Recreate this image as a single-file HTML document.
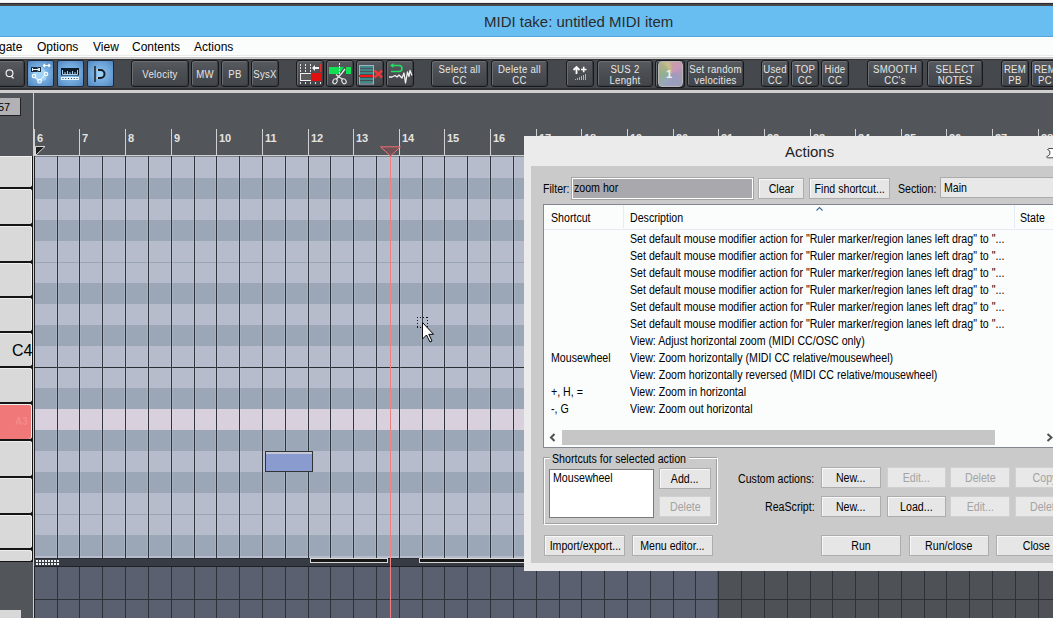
<!DOCTYPE html><html><head><meta charset="utf-8"><style>
*{margin:0;padding:0;box-sizing:border-box}
html,body{width:1053px;height:618px;overflow:hidden;background:#525559;position:relative;font-family:"Liberation Sans",sans-serif}
div{position:absolute}
.t{white-space:pre;line-height:1}
.dt{font-size:12px;color:#000;transform:scaleX(.885);transform-origin:0 0}
.tb{border:1px solid #17191c;border-radius:3px;background:linear-gradient(#575a5e,#4a4d51 50%,#424549);box-shadow:inset 1px 1px 0 #6a6d72,inset -1px -1px 0 #3a3d41}
.tbt{color:#e6e6e6;font-size:10px;line-height:10px;text-align:center;width:100%;white-space:pre;transform:scaleX(.96);letter-spacing:.3px}
.bb{border:1px solid #1c2a3c;border-radius:2px;background:radial-gradient(circle at 50% 50%,#8cc2ee 0,#6fa6da 55%,#4f84bd 100%)}
.btn{border:1px solid #adadad;background:#e6e6e6;box-shadow:inset 1px 1px 0 #f8f8f8;color:#000;font-size:12px;text-align:center;white-space:pre}
.btn span{display:inline-block;transform:scaleX(.885)}
.dis{border:1px solid #d0d0d0;background:#e8e8e8;color:#a3a3a3;box-shadow:none}
.lv{font-size:12px;color:#000;white-space:pre;line-height:1}
</style></head><body>
<div style="left:0px;top:0px;width:1053px;height:3px;background:#fafafa"></div>
<div style="left:0px;top:2px;width:1053px;height:1px;background:#ececec"></div>
<div style="left:0px;top:3px;width:1053px;height:1px;background:#2a2a2e"></div>
<div style="left:0px;top:4px;width:1053px;height:2px;background:#48484c"></div>
<div style="left:0px;top:6px;width:1053px;height:30px;background:#68bef0"></div>
<div style="left:0px;top:36px;width:1053px;height:1px;background:#55a4d6"></div>
<div class="t" style="left:484px;top:14px;font-size:15px;color:#2b2b2b">MIDI take: untitled MIDI item</div>
<div style="left:0px;top:37px;width:1053px;height:1px;background:#ffffff"></div>
<div style="left:0px;top:38px;width:1053px;height:17px;background:#fbfcfc"></div>
<div style="left:0px;top:55px;width:1053px;height:1px;background:#ebebeb"></div>
<div style="left:0px;top:56px;width:1053px;height:1px;background:#ffffff"></div>
<div style="left:0px;top:57px;width:1053px;height:1px;background:#c8c8c8"></div>
<div class="t" style="left:-1px;top:41px;font-size:12px;color:#000">gate</div>
<div class="t" style="left:37px;top:41px;font-size:12px;color:#000">Options</div>
<div class="t" style="left:93px;top:41px;font-size:12px;color:#000">View</div>
<div class="t" style="left:132px;top:41px;font-size:12px;color:#000">Contents</div>
<div class="t" style="left:194px;top:41px;font-size:12px;color:#000">Actions</div>
<div style="left:0px;top:58px;width:1053px;height:1px;background:#d0d0d0"></div>
<div style="left:0px;top:59px;width:1053px;height:1px;background:#383a3e"></div>
<div style="left:0px;top:60px;width:1053px;height:28px;background:#45484c"></div>
<div style="left:0px;top:88px;width:1053px;height:2px;background:#303236"></div>
<div style="left:0px;top:90px;width:1053px;height:3px;background:#cfcfcf"></div>
<div class="tb" style="left:-3px;top:60px;width:28px;height:27px">
<div class="tbt" style="top:9px"></div>
</div>
<div class="bb" style="left:27px;top:60px;width:27px;height:27px"></div>
<div class="bb" style="left:57px;top:60px;width:27px;height:27px"></div>
<div class="bb" style="left:87px;top:60px;width:27px;height:27px"></div>
<svg style="position:absolute;left:0px;top:60px" width="24" height="27" viewBox="0 0 24 27"><circle cx="9.5" cy="13.3" r="3.4" fill="none" stroke="#eeeeee" stroke-width="1.2"/><path d="M11 16 L13 18 H14" stroke="#eeeeee" stroke-width="1.2" fill="none"/></svg>
<svg style="position:absolute;left:27px;top:60px" width="27" height="27" viewBox="0 0 27 27"><path d="M6 10 L15 7 L20 13 L19 20 L12 22 L6 17Z" fill="#a8d8fa" opacity=".8"/><rect x="4" y="7" width="10" height="5" fill="#1c2c3c"/><path d="M5.5 9.5 H12.5 M5.5 8 V11 M12.5 8 V11 M10.5 8 L12.5 9.5 L10.5 11" stroke="#e8f4ff" stroke-width="1" fill="none"/><path d="M16.5 5.5 H23 M18 4 L16.5 5.5 L18 7 M21.5 4 L23 5.5 L21.5 7" stroke="#fff" stroke-width="1.2" fill="none"/><path d="M8 17 L12 20.5 M13.5 20 L17.5 15.5" stroke="#fff" stroke-width="1"/><circle cx="7" cy="16" r="1.8" fill="none" stroke="#fff" stroke-width="1.1"/><circle cx="12.5" cy="21.2" r="1.8" fill="none" stroke="#fff" stroke-width="1.1"/><circle cx="19" cy="14" r="1.8" fill="none" stroke="#fff" stroke-width="1.1"/></svg>
<svg style="position:absolute;left:57px;top:60px" width="27" height="27" viewBox="0 0 27 27"><rect x="4" y="8" width="18" height="7.5" fill="#0e1c2a"/><path d="M5.5 10 V14.5 H20.5 V10 M8 12 V14.5 M10.5 11 V14.5 M13 12 V14.5 M15.5 11 V14.5 M18 12 V14.5" stroke="#a8d0f0" stroke-width="1" fill="none"/><rect x="4" y="17" width="18" height="3" fill="#e6f6ff"/><path d="M5.5 18.5 H21" stroke="#203040" stroke-width="1.2" stroke-dasharray="1 1.8"/></svg>
<svg style="position:absolute;left:87px;top:60px" width="27" height="27" viewBox="0 0 27 27"><path d="M10 10 H14 A4 4 0 0 1 14 18 H10Z" fill="#9ed4fa" opacity=".8"/><path d="M8 6 V22" stroke="#1e2a36" stroke-width="1.6"/><path d="M10 10 H13.5 A4 4 0 0 1 13.5 18 H10" stroke="#141c24" stroke-width="2" fill="none"/><rect x="9.5" y="9" width="1.5" height="2" fill="#f0c090"/><rect x="9.5" y="17" width="1.5" height="2" fill="#f0c090"/></svg>
<div class="tb" style="left:131px;top:60px;width:58px;height:27px">
<div class="tbt" style="top:9px">Velocity</div>
</div>
<div class="tb" style="left:191px;top:60px;width:28px;height:27px">
<div class="tbt" style="top:9px">MW</div>
</div>
<div class="tb" style="left:221px;top:60px;width:28px;height:27px">
<div class="tbt" style="top:9px">PB</div>
</div>
<div class="tb" style="left:251px;top:60px;width:28px;height:27px">
<div class="tbt" style="top:9px">SysX</div>
</div>
<div class="tb" style="left:296px;top:60px;width:28px;height:27px">
<div class="tbt" style="top:9px"></div>
</div>
<div class="tb" style="left:326px;top:60px;width:28px;height:27px">
<div class="tbt" style="top:9px"></div>
</div>
<div class="tb" style="left:356px;top:60px;width:28px;height:27px">
<div class="tbt" style="top:9px"></div>
</div>
<div class="tb" style="left:386px;top:60px;width:28px;height:27px">
<div class="tbt" style="top:9px"></div>
</div>
<svg style="position:absolute;left:296px;top:60px" width="28" height="27" viewBox="0 0 28 27"><path d="M4.5 4 V6 M4.5 7 V9 M4.5 10 V12 M9.5 4 V6 M9.5 7 V9 M9.5 10 V12 M14.5 4 V6 M14.5 7 V9 M14.5 10 V12" stroke="#e0e0e0" stroke-width="1"/><path d="M16 8 L19 5 V7 H23 V9 H19 V11Z" fill="#f4f4f4"/><path d="M24.5 4 V12" stroke="#e03030" stroke-width="1"/><rect x="4.5" y="13.5" width="11" height="7" fill="#5c5c5c" stroke="#f0f0f0" stroke-width="1"/><rect x="15" y="13" width="10" height="8" fill="#e01010"/><path d="M4.5 22 V24 M9.5 22 V24 M14.5 22 V24 M19.5 22 V24 M24.5 22 V24" stroke="#e0e0e0" stroke-width="1"/></svg>
<svg style="position:absolute;left:326px;top:60px" width="28" height="27" viewBox="0 0 28 27"><path d="M3 7 H18 L13 14 H3Z" fill="#12e050"/><path d="M20 7 H25 V14 H20Z" fill="#12e050"/><path d="M13.5 3 V15" stroke="#f0f0f0" stroke-width="1" stroke-dasharray="2 1"/><path d="M19 9 L16 13 L10.5 19 M10 14.5 L13 17 L16.5 19" stroke="#e8e8e8" stroke-width="1.3" fill="none"/><ellipse cx="9" cy="21.3" rx="2" ry="2.6" transform="rotate(30 9 21.3)" fill="none" stroke="#e8e8e8" stroke-width="1.1"/><ellipse cx="18" cy="21.3" rx="2" ry="2.6" transform="rotate(-30 18 21.3)" fill="none" stroke="#e8e8e8" stroke-width="1.1"/></svg>
<svg style="position:absolute;left:356px;top:60px" width="28" height="27" viewBox="0 0 28 27"><rect x="3.5" y="5.5" width="14" height="18.5" fill="none" stroke="#9fb4c4" stroke-width="1"/><path d="M4 7 H17 M4 10 H17 M4 13 H17 M4 19 H17 M4 22 H17" stroke="#3f8888" stroke-width="2"/><path d="M3 16 H17" stroke="#f01818" stroke-width="2"/><path d="M18.5 10.5 L26 17.5 M26 10.5 L18.5 17.5" stroke="#e83838" stroke-width="2.6"/></svg>
<svg style="position:absolute;left:386px;top:60px" width="28" height="27" viewBox="0 0 28 27"><path d="M7 5.5 H13 A3 3 0 0 1 13 11.5 H5" stroke="#22e060" stroke-width="1.6" fill="none"/><path d="M4 5.5 L7.5 3 V8Z" fill="#22e060"/><path d="M3 17 H6 L9 15.5 L11 17 L13 15 L16 18 L18 13 L19.5 23 L21.5 12 L23 16.5 L24 10.5 L26 15.5" stroke="#f0f0f0" stroke-width="1.3" fill="none" stroke-linejoin="round"/></svg>
<div class="tb" style="left:431px;top:60px;width:57px;height:27px">
<div class="tbt" style="top:4px">Select all</div><div class="tbt" style="top:15px">CC</div>
</div>
<div class="tb" style="left:491px;top:60px;width:57px;height:27px">
<div class="tbt" style="top:4px">Delete all</div><div class="tbt" style="top:15px">CC</div>
</div>
<div class="tb" style="left:566px;top:60px;width:28px;height:27px">
<div class="tbt" style="top:9px"></div>
</div>
<svg style="position:absolute;left:566px;top:60px" width="28" height="27" viewBox="0 0 28 27"><path d="M10.5 14 V7.5 M7.5 10 L10.5 7 L13.5 10" stroke="#fafafa" stroke-width="1.8" fill="none"/><path d="M15 9.5 H20.5 M17.7 6.8 V12.3" stroke="#fafafa" stroke-width="1.6"/><path d="M9.5 19 V20 M11.5 18 V20 M13.5 17 V20 M15.5 16 V20 M17.5 15 V20 M19.5 14 V20" stroke="#8ab8f0" stroke-width="1"/></svg>
<div class="tb" style="left:597px;top:60px;width:56px;height:27px">
<div class="tbt" style="top:4px">SUS 2</div><div class="tbt" style="top:15px">Lenght</div>
</div>
<div class="tb" style="left:655px;top:60px;width:30px;height:28px;background:#2a2c30"></div>
<div style="left:658px;top:61px;width:25px;height:26px;border:1px solid #b8b8b8;border-radius:4px;background:conic-gradient(from 0deg at 55% 45%,#c8a0a0 0deg,#c898b8 50deg,#b098b8 90deg,#9c9cbc 140deg,#9aa0c0 190deg,#98a8b8 220deg,#90b090 255deg,#a0b088 285deg,#b0b088 310deg,#c8c090 335deg,#c8a898 360deg)"></div>
<div class="t" style="left:666px;top:69px;font-size:11px;font-weight:bold;color:#f0f0f0;font-family:"Liberation Serif"">1</div>
<div class="tb" style="left:687px;top:60px;width:57px;height:27px">
<div class="tbt" style="top:4px">Set random</div><div class="tbt" style="top:15px">velocities</div>
</div>
<div class="tb" style="left:761px;top:60px;width:28px;height:27px">
<div class="tbt" style="top:4px">Used</div><div class="tbt" style="top:15px">CC</div>
</div>
<div class="tb" style="left:791px;top:60px;width:28px;height:27px">
<div class="tbt" style="top:4px">TOP</div><div class="tbt" style="top:15px">CC</div>
</div>
<div class="tb" style="left:821px;top:60px;width:28px;height:27px">
<div class="tbt" style="top:4px">Hide</div><div class="tbt" style="top:15px">CC</div>
</div>
<div class="tb" style="left:867px;top:60px;width:56px;height:27px">
<div class="tbt" style="top:4px">SMOOTH</div><div class="tbt" style="top:15px">CC's</div>
</div>
<div class="tb" style="left:927px;top:60px;width:56px;height:27px">
<div class="tbt" style="top:4px">SELECT</div><div class="tbt" style="top:15px">NOTES</div>
</div>
<div class="tb" style="left:1001px;top:60px;width:28px;height:27px">
<div class="tbt" style="top:4px">REM</div><div class="tbt" style="top:15px">PB</div>
</div>
<div class="tb" style="left:1031px;top:60px;width:28px;height:27px">
<div class="tbt" style="top:4px">REM</div><div class="tbt" style="top:15px">PC</div>
</div>
<div style="left:0px;top:93px;width:1053px;height:63px;background:#525559"></div>
<div style="left:0;top:98px;width:21px;height:18px;background:#b2b2b6;border-right:1px solid #222;border-bottom:1px solid #222"></div>
<div class="t" style="left:-2px;top:102px;font-size:11px;color:#000">57</div>
<div style="left:33px;top:93px;width:1px;height:525px;background:#d0d0d0"></div>
<div style="left:34px;top:129px;width:1px;height:26px;background:#d0d0d0"></div>
<div class="t" style="left:37px;top:133px;font-size:11px;font-weight:bold;color:#e4e4e4">6</div>
<div style="left:79px;top:129px;width:1px;height:26px;background:#d0d0d0"></div>
<div class="t" style="left:82px;top:133px;font-size:11px;font-weight:bold;color:#e4e4e4">7</div>
<div style="left:125px;top:129px;width:1px;height:26px;background:#d0d0d0"></div>
<div class="t" style="left:128px;top:133px;font-size:11px;font-weight:bold;color:#e4e4e4">8</div>
<div style="left:171px;top:129px;width:1px;height:26px;background:#d0d0d0"></div>
<div class="t" style="left:174px;top:133px;font-size:11px;font-weight:bold;color:#e4e4e4">9</div>
<div style="left:216px;top:129px;width:1px;height:26px;background:#d0d0d0"></div>
<div class="t" style="left:219px;top:133px;font-size:11px;font-weight:bold;color:#e4e4e4">10</div>
<div style="left:262px;top:129px;width:1px;height:26px;background:#d0d0d0"></div>
<div class="t" style="left:265px;top:133px;font-size:11px;font-weight:bold;color:#e4e4e4">11</div>
<div style="left:308px;top:129px;width:1px;height:26px;background:#d0d0d0"></div>
<div class="t" style="left:311px;top:133px;font-size:11px;font-weight:bold;color:#e4e4e4">12</div>
<div style="left:353px;top:129px;width:1px;height:26px;background:#d0d0d0"></div>
<div class="t" style="left:356px;top:133px;font-size:11px;font-weight:bold;color:#e4e4e4">13</div>
<div style="left:399px;top:129px;width:1px;height:26px;background:#d0d0d0"></div>
<div class="t" style="left:402px;top:133px;font-size:11px;font-weight:bold;color:#e4e4e4">14</div>
<div style="left:444px;top:129px;width:1px;height:26px;background:#d0d0d0"></div>
<div class="t" style="left:447px;top:133px;font-size:11px;font-weight:bold;color:#e4e4e4">15</div>
<div style="left:490px;top:129px;width:1px;height:26px;background:#d0d0d0"></div>
<div class="t" style="left:493px;top:133px;font-size:11px;font-weight:bold;color:#e4e4e4">16</div>
<div style="left:536px;top:129px;width:1px;height:26px;background:#d0d0d0"></div>
<div class="t" style="left:539px;top:133px;font-size:11px;font-weight:bold;color:#e4e4e4">17</div>
<div style="left:581px;top:129px;width:1px;height:26px;background:#d0d0d0"></div>
<div class="t" style="left:584px;top:133px;font-size:11px;font-weight:bold;color:#e4e4e4">18</div>
<div style="left:627px;top:129px;width:1px;height:26px;background:#d0d0d0"></div>
<div class="t" style="left:630px;top:133px;font-size:11px;font-weight:bold;color:#e4e4e4">19</div>
<div style="left:673px;top:129px;width:1px;height:26px;background:#d0d0d0"></div>
<div class="t" style="left:676px;top:133px;font-size:11px;font-weight:bold;color:#e4e4e4">20</div>
<div style="left:718px;top:129px;width:1px;height:26px;background:#d0d0d0"></div>
<div class="t" style="left:721px;top:133px;font-size:11px;font-weight:bold;color:#e4e4e4">21</div>
<div style="left:764px;top:129px;width:1px;height:26px;background:#d0d0d0"></div>
<div class="t" style="left:767px;top:133px;font-size:11px;font-weight:bold;color:#e4e4e4">22</div>
<div style="left:810px;top:129px;width:1px;height:26px;background:#d0d0d0"></div>
<div class="t" style="left:813px;top:133px;font-size:11px;font-weight:bold;color:#e4e4e4">23</div>
<div style="left:855px;top:129px;width:1px;height:26px;background:#d0d0d0"></div>
<div class="t" style="left:858px;top:133px;font-size:11px;font-weight:bold;color:#e4e4e4">24</div>
<div style="left:901px;top:129px;width:1px;height:26px;background:#d0d0d0"></div>
<div class="t" style="left:904px;top:133px;font-size:11px;font-weight:bold;color:#e4e4e4">25</div>
<div style="left:946px;top:129px;width:1px;height:26px;background:#d0d0d0"></div>
<div class="t" style="left:949px;top:133px;font-size:11px;font-weight:bold;color:#e4e4e4">26</div>
<div style="left:992px;top:129px;width:1px;height:26px;background:#d0d0d0"></div>
<div class="t" style="left:995px;top:133px;font-size:11px;font-weight:bold;color:#e4e4e4">27</div>
<div style="left:1038px;top:129px;width:1px;height:26px;background:#d0d0d0"></div>
<div class="t" style="left:1041px;top:133px;font-size:11px;font-weight:bold;color:#e4e4e4">28</div>
<div style="left:34px;top:155px;width:1019px;height:1px;background:#d0d0d0"></div>
<svg style="position:absolute;left:34px;top:145px" width="14" height="12"><path d="M1.5 1.5 H11 L1.5 10.5 Z" fill="#1e1e1e" stroke="#d8d8d8" stroke-width="1"/></svg>
<div style="left:35px;top:157px;width:1018px;height:21px;background:#b6bccb"></div>
<div style="left:35px;top:178px;width:1018px;height:21px;background:#9ba6b6"></div>
<div style="left:35px;top:199px;width:1018px;height:21px;background:#b6bccb"></div>
<div style="left:35px;top:220px;width:1018px;height:21px;background:#9ba6b6"></div>
<div style="left:35px;top:241px;width:1018px;height:21px;background:#b6bccb"></div>
<div style="left:35px;top:262px;width:1018px;height:21px;background:#b6bccb"></div>
<div style="left:35px;top:283px;width:1018px;height:21px;background:#9ba6b6"></div>
<div style="left:35px;top:304px;width:1018px;height:21px;background:#b6bccb"></div>
<div style="left:35px;top:325px;width:1018px;height:21px;background:#9ba6b6"></div>
<div style="left:35px;top:346px;width:1018px;height:21px;background:#b6bccb"></div>
<div style="left:35px;top:367px;width:1018px;height:21px;background:#b6bccb"></div>
<div style="left:35px;top:388px;width:1018px;height:21px;background:#9ba6b6"></div>
<div style="left:35px;top:409px;width:1018px;height:21px;background:#d8d0dc"></div>
<div style="left:35px;top:430px;width:1018px;height:21px;background:#9ba6b6"></div>
<div style="left:35px;top:451px;width:1018px;height:21px;background:#b6bccb"></div>
<div style="left:35px;top:472px;width:1018px;height:21px;background:#9ba6b6"></div>
<div style="left:35px;top:493px;width:1018px;height:21px;background:#b6bccb"></div>
<div style="left:35px;top:514px;width:1018px;height:21px;background:#b6bccb"></div>
<div style="left:35px;top:535px;width:1018px;height:21px;background:#9ba6b6"></div>
<div style="left:35px;top:556px;width:1018px;height:2px;background:#b6bccb"></div>
<div style="left:34px;top:156px;width:1px;height:402px;background:#202226"></div>
<div style="left:35px;top:156px;width:1018px;height:1px;background:#7c828e"></div>
<div style="left:35px;top:367px;width:1018px;height:1px;background:#2a2d33"></div>
<div style="left:35px;top:514px;width:1018px;height:1px;background:#9aa5b4"></div>
<div style="left:35px;top:262px;width:1018px;height:1px;background:#9aa5b4"></div>
<div style="left:56px;top:157px;width:3px;height:401px;background:rgba(255,255,255,.1)"></div>
<div style="left:57px;top:156px;width:1px;height:402px;background:#30353d"></div>
<div style="left:78px;top:157px;width:3px;height:401px;background:rgba(255,255,255,.1)"></div>
<div style="left:79px;top:156px;width:1px;height:402px;background:#30353d"></div>
<div style="left:101px;top:157px;width:3px;height:401px;background:rgba(255,255,255,.1)"></div>
<div style="left:102px;top:156px;width:1px;height:402px;background:#30353d"></div>
<div style="left:124px;top:157px;width:3px;height:401px;background:rgba(255,255,255,.1)"></div>
<div style="left:125px;top:156px;width:1px;height:402px;background:#30353d"></div>
<div style="left:147px;top:157px;width:3px;height:401px;background:rgba(255,255,255,.1)"></div>
<div style="left:148px;top:156px;width:1px;height:402px;background:#30353d"></div>
<div style="left:170px;top:157px;width:3px;height:401px;background:rgba(255,255,255,.1)"></div>
<div style="left:171px;top:156px;width:1px;height:402px;background:#30353d"></div>
<div style="left:193px;top:157px;width:3px;height:401px;background:rgba(255,255,255,.1)"></div>
<div style="left:194px;top:156px;width:1px;height:402px;background:#30353d"></div>
<div style="left:215px;top:157px;width:3px;height:401px;background:rgba(255,255,255,.1)"></div>
<div style="left:216px;top:156px;width:1px;height:402px;background:#30353d"></div>
<div style="left:238px;top:157px;width:3px;height:401px;background:rgba(255,255,255,.1)"></div>
<div style="left:239px;top:156px;width:1px;height:402px;background:#30353d"></div>
<div style="left:261px;top:157px;width:3px;height:401px;background:rgba(255,255,255,.1)"></div>
<div style="left:262px;top:156px;width:1px;height:402px;background:#30353d"></div>
<div style="left:284px;top:157px;width:3px;height:401px;background:rgba(255,255,255,.1)"></div>
<div style="left:285px;top:156px;width:1px;height:402px;background:#30353d"></div>
<div style="left:307px;top:157px;width:3px;height:401px;background:rgba(255,255,255,.1)"></div>
<div style="left:308px;top:156px;width:1px;height:402px;background:#30353d"></div>
<div style="left:329px;top:157px;width:3px;height:401px;background:rgba(255,255,255,.1)"></div>
<div style="left:330px;top:156px;width:1px;height:402px;background:#30353d"></div>
<div style="left:352px;top:157px;width:3px;height:401px;background:rgba(255,255,255,.1)"></div>
<div style="left:353px;top:156px;width:1px;height:402px;background:#30353d"></div>
<div style="left:375px;top:157px;width:3px;height:401px;background:rgba(255,255,255,.1)"></div>
<div style="left:376px;top:156px;width:1px;height:402px;background:#30353d"></div>
<div style="left:398px;top:157px;width:3px;height:401px;background:rgba(255,255,255,.1)"></div>
<div style="left:399px;top:156px;width:1px;height:402px;background:#30353d"></div>
<div style="left:421px;top:157px;width:3px;height:401px;background:rgba(255,255,255,.1)"></div>
<div style="left:422px;top:156px;width:1px;height:402px;background:#30353d"></div>
<div style="left:443px;top:157px;width:3px;height:401px;background:rgba(255,255,255,.1)"></div>
<div style="left:444px;top:156px;width:1px;height:402px;background:#30353d"></div>
<div style="left:466px;top:157px;width:3px;height:401px;background:rgba(255,255,255,.1)"></div>
<div style="left:467px;top:156px;width:1px;height:402px;background:#30353d"></div>
<div style="left:489px;top:157px;width:3px;height:401px;background:rgba(255,255,255,.1)"></div>
<div style="left:490px;top:156px;width:1px;height:402px;background:#30353d"></div>
<div style="left:512px;top:157px;width:3px;height:401px;background:rgba(255,255,255,.1)"></div>
<div style="left:513px;top:156px;width:1px;height:402px;background:#30353d"></div>
<div style="left:535px;top:157px;width:3px;height:401px;background:rgba(255,255,255,.1)"></div>
<div style="left:536px;top:156px;width:1px;height:402px;background:#30353d"></div>
<div style="left:558px;top:157px;width:3px;height:401px;background:rgba(255,255,255,.1)"></div>
<div style="left:559px;top:156px;width:1px;height:402px;background:#30353d"></div>
<div style="left:580px;top:157px;width:3px;height:401px;background:rgba(255,255,255,.1)"></div>
<div style="left:581px;top:156px;width:1px;height:402px;background:#30353d"></div>
<div style="left:603px;top:157px;width:3px;height:401px;background:rgba(255,255,255,.1)"></div>
<div style="left:604px;top:156px;width:1px;height:402px;background:#30353d"></div>
<div style="left:626px;top:157px;width:3px;height:401px;background:rgba(255,255,255,.1)"></div>
<div style="left:627px;top:156px;width:1px;height:402px;background:#30353d"></div>
<div style="left:649px;top:157px;width:3px;height:401px;background:rgba(255,255,255,.1)"></div>
<div style="left:650px;top:156px;width:1px;height:402px;background:#30353d"></div>
<div style="left:672px;top:157px;width:3px;height:401px;background:rgba(255,255,255,.1)"></div>
<div style="left:673px;top:156px;width:1px;height:402px;background:#30353d"></div>
<div style="left:694px;top:157px;width:3px;height:401px;background:rgba(255,255,255,.1)"></div>
<div style="left:695px;top:156px;width:1px;height:402px;background:#30353d"></div>
<div style="left:717px;top:157px;width:3px;height:401px;background:rgba(255,255,255,.1)"></div>
<div style="left:718px;top:156px;width:1px;height:402px;background:#30353d"></div>
<div style="left:740px;top:157px;width:3px;height:401px;background:rgba(255,255,255,.1)"></div>
<div style="left:741px;top:156px;width:1px;height:402px;background:#30353d"></div>
<div style="left:763px;top:157px;width:3px;height:401px;background:rgba(255,255,255,.1)"></div>
<div style="left:764px;top:156px;width:1px;height:402px;background:#30353d"></div>
<div style="left:786px;top:157px;width:3px;height:401px;background:rgba(255,255,255,.1)"></div>
<div style="left:787px;top:156px;width:1px;height:402px;background:#30353d"></div>
<div style="left:809px;top:157px;width:3px;height:401px;background:rgba(255,255,255,.1)"></div>
<div style="left:810px;top:156px;width:1px;height:402px;background:#30353d"></div>
<div style="left:831px;top:157px;width:3px;height:401px;background:rgba(255,255,255,.1)"></div>
<div style="left:832px;top:156px;width:1px;height:402px;background:#30353d"></div>
<div style="left:854px;top:157px;width:3px;height:401px;background:rgba(255,255,255,.1)"></div>
<div style="left:855px;top:156px;width:1px;height:402px;background:#30353d"></div>
<div style="left:877px;top:157px;width:3px;height:401px;background:rgba(255,255,255,.1)"></div>
<div style="left:878px;top:156px;width:1px;height:402px;background:#30353d"></div>
<div style="left:900px;top:157px;width:3px;height:401px;background:rgba(255,255,255,.1)"></div>
<div style="left:901px;top:156px;width:1px;height:402px;background:#30353d"></div>
<div style="left:923px;top:157px;width:3px;height:401px;background:rgba(255,255,255,.1)"></div>
<div style="left:924px;top:156px;width:1px;height:402px;background:#30353d"></div>
<div style="left:945px;top:157px;width:3px;height:401px;background:rgba(255,255,255,.1)"></div>
<div style="left:946px;top:156px;width:1px;height:402px;background:#30353d"></div>
<div style="left:968px;top:157px;width:3px;height:401px;background:rgba(255,255,255,.1)"></div>
<div style="left:969px;top:156px;width:1px;height:402px;background:#30353d"></div>
<div style="left:991px;top:157px;width:3px;height:401px;background:rgba(255,255,255,.1)"></div>
<div style="left:992px;top:156px;width:1px;height:402px;background:#30353d"></div>
<div style="left:1014px;top:157px;width:3px;height:401px;background:rgba(255,255,255,.1)"></div>
<div style="left:1015px;top:156px;width:1px;height:402px;background:#30353d"></div>
<div style="left:1037px;top:157px;width:3px;height:401px;background:rgba(255,255,255,.1)"></div>
<div style="left:1038px;top:156px;width:1px;height:402px;background:#30353d"></div>
<div style="left:1059px;top:157px;width:3px;height:401px;background:rgba(255,255,255,.1)"></div>
<div style="left:1060px;top:156px;width:1px;height:402px;background:#30353d"></div>
<div style="left:265px;top:451px;width:48px;height:21px;border:1px solid #303438;background:linear-gradient(#c4c8d4 0,#c4c8d4 2px,#8a9ccf 2px)"></div>
<div style="left:34px;top:558px;width:1019px;height:1px;background:#2a2e34"></div>
<div style="left:34px;top:559px;width:1019px;height:7px;background:#363b44"></div>
<div style="left:34px;top:566px;width:1019px;height:1px;background:#1e2024"></div>
<div style="left:36px;top:560px;width:2px;height:2px;background:#f0f0f0"></div>
<div style="left:39px;top:560px;width:2px;height:2px;background:#f0f0f0"></div>
<div style="left:42px;top:560px;width:2px;height:2px;background:#f0f0f0"></div>
<div style="left:45px;top:560px;width:2px;height:2px;background:#f0f0f0"></div>
<div style="left:48px;top:560px;width:2px;height:2px;background:#f0f0f0"></div>
<div style="left:51px;top:560px;width:2px;height:2px;background:#f0f0f0"></div>
<div style="left:54px;top:560px;width:2px;height:2px;background:#f0f0f0"></div>
<div style="left:57px;top:560px;width:2px;height:2px;background:#f0f0f0"></div>
<div style="left:36px;top:563px;width:2px;height:2px;background:#f0f0f0"></div>
<div style="left:39px;top:563px;width:2px;height:2px;background:#f0f0f0"></div>
<div style="left:42px;top:563px;width:2px;height:2px;background:#f0f0f0"></div>
<div style="left:45px;top:563px;width:2px;height:2px;background:#f0f0f0"></div>
<div style="left:48px;top:563px;width:2px;height:2px;background:#f0f0f0"></div>
<div style="left:51px;top:563px;width:2px;height:2px;background:#f0f0f0"></div>
<div style="left:54px;top:563px;width:2px;height:2px;background:#f0f0f0"></div>
<div style="left:57px;top:563px;width:2px;height:2px;background:#f0f0f0"></div>
<div style="left:310px;top:558px;width:78px;height:5px;border:1px solid #d8d8d8;background:#161616"></div>
<div style="left:419px;top:558px;width:634px;height:5px;border:1px solid #d8d8d8;background:#161616"></div>
<div style="left:35px;top:567px;width:682px;height:51px;background:#5a6070"></div>
<div style="left:717px;top:567px;width:336px;height:51px;background:#4e5155"></div>
<div style="left:35px;top:599px;width:1018px;height:1px;background:#2e3238"></div>
<div style="left:57px;top:567px;width:1px;height:51px;background:#2e3238"></div>
<div style="left:79px;top:567px;width:1px;height:51px;background:#2e3238"></div>
<div style="left:102px;top:567px;width:1px;height:51px;background:#2e3238"></div>
<div style="left:125px;top:567px;width:1px;height:51px;background:#2e3238"></div>
<div style="left:148px;top:567px;width:1px;height:51px;background:#2e3238"></div>
<div style="left:171px;top:567px;width:1px;height:51px;background:#2e3238"></div>
<div style="left:194px;top:567px;width:1px;height:51px;background:#2e3238"></div>
<div style="left:216px;top:567px;width:1px;height:51px;background:#2e3238"></div>
<div style="left:239px;top:567px;width:1px;height:51px;background:#2e3238"></div>
<div style="left:262px;top:567px;width:1px;height:51px;background:#2e3238"></div>
<div style="left:285px;top:567px;width:1px;height:51px;background:#2e3238"></div>
<div style="left:308px;top:567px;width:1px;height:51px;background:#2e3238"></div>
<div style="left:330px;top:567px;width:1px;height:51px;background:#2e3238"></div>
<div style="left:353px;top:567px;width:1px;height:51px;background:#2e3238"></div>
<div style="left:376px;top:567px;width:1px;height:51px;background:#2e3238"></div>
<div style="left:399px;top:567px;width:1px;height:51px;background:#2e3238"></div>
<div style="left:422px;top:567px;width:1px;height:51px;background:#2e3238"></div>
<div style="left:444px;top:567px;width:1px;height:51px;background:#2e3238"></div>
<div style="left:467px;top:567px;width:1px;height:51px;background:#2e3238"></div>
<div style="left:490px;top:567px;width:1px;height:51px;background:#2e3238"></div>
<div style="left:513px;top:567px;width:1px;height:51px;background:#2e3238"></div>
<div style="left:536px;top:567px;width:1px;height:51px;background:#2e3238"></div>
<div style="left:559px;top:567px;width:1px;height:51px;background:#2e3238"></div>
<div style="left:581px;top:567px;width:1px;height:51px;background:#2e3238"></div>
<div style="left:604px;top:567px;width:1px;height:51px;background:#2e3238"></div>
<div style="left:627px;top:567px;width:1px;height:51px;background:#2e3238"></div>
<div style="left:650px;top:567px;width:1px;height:51px;background:#2e3238"></div>
<div style="left:673px;top:567px;width:1px;height:51px;background:#2e3238"></div>
<div style="left:695px;top:567px;width:1px;height:51px;background:#2e3238"></div>
<div style="left:718px;top:567px;width:1px;height:51px;background:#2e3238"></div>
<div style="left:741px;top:567px;width:1px;height:51px;background:#2e3238"></div>
<div style="left:764px;top:567px;width:1px;height:51px;background:#2e3238"></div>
<div style="left:787px;top:567px;width:1px;height:51px;background:#2e3238"></div>
<div style="left:810px;top:567px;width:1px;height:51px;background:#2e3238"></div>
<div style="left:832px;top:567px;width:1px;height:51px;background:#2e3238"></div>
<div style="left:855px;top:567px;width:1px;height:51px;background:#2e3238"></div>
<div style="left:878px;top:567px;width:1px;height:51px;background:#2e3238"></div>
<div style="left:901px;top:567px;width:1px;height:51px;background:#2e3238"></div>
<div style="left:924px;top:567px;width:1px;height:51px;background:#2e3238"></div>
<div style="left:946px;top:567px;width:1px;height:51px;background:#2e3238"></div>
<div style="left:969px;top:567px;width:1px;height:51px;background:#2e3238"></div>
<div style="left:992px;top:567px;width:1px;height:51px;background:#2e3238"></div>
<div style="left:1015px;top:567px;width:1px;height:51px;background:#2e3238"></div>
<div style="left:1038px;top:567px;width:1px;height:51px;background:#2e3238"></div>
<div style="left:1060px;top:567px;width:1px;height:51px;background:#2e3238"></div>
<div style="left:34px;top:567px;width:1px;height:51px;background:#202226"></div>
<div style="left:0px;top:156px;width:33px;height:406px;background:#141414"></div>
<div style="left:0;top:156px;width:32px;height:31px;background:#d9d9d9;border-radius:0 0 3px 0;box-shadow:inset -1px 0 0 #f2f2f2,inset 0 1px 0 #eeeeee"></div>
<div style="left:0;top:189px;width:32px;height:35px;background:#d9d9d9;border-radius:0 3px 3px 0;box-shadow:inset -1px 0 0 #f2f2f2,inset 0 1px 0 #eeeeee"></div>
<div style="left:0;top:226px;width:32px;height:35px;background:#d9d9d9;border-radius:0 3px 3px 0;box-shadow:inset -1px 0 0 #f2f2f2,inset 0 1px 0 #eeeeee"></div>
<div style="left:0;top:263px;width:32px;height:33px;background:#d9d9d9;border-radius:0 3px 3px 0;box-shadow:inset -1px 0 0 #f2f2f2,inset 0 1px 0 #eeeeee"></div>
<div style="left:0;top:298px;width:32px;height:33px;background:#d9d9d9;border-radius:0 3px 3px 0;box-shadow:inset -1px 0 0 #f2f2f2,inset 0 1px 0 #eeeeee"></div>
<div style="left:0;top:333px;width:32px;height:33px;background:#d9d9d9;border-radius:0 3px 3px 0;box-shadow:inset -1px 0 0 #f2f2f2,inset 0 1px 0 #eeeeee"></div>
<div style="left:0;top:368px;width:32px;height:34px;background:#d9d9d9;border-radius:0 3px 3px 0;box-shadow:inset -1px 0 0 #f2f2f2,inset 0 1px 0 #eeeeee"></div>
<div style="left:0;top:404px;width:32px;height:35px;background:#f07878;border-radius:0 3px 3px 0;box-shadow:inset -1px 0 0 #f2f2f2,inset 0 1px 0 #eeeeee"></div>
<div style="left:0;top:441px;width:32px;height:35px;background:#d9d9d9;border-radius:0 3px 3px 0;box-shadow:inset -1px 0 0 #f2f2f2,inset 0 1px 0 #eeeeee"></div>
<div style="left:0;top:478px;width:32px;height:35px;background:#d9d9d9;border-radius:0 3px 3px 0;box-shadow:inset -1px 0 0 #f2f2f2,inset 0 1px 0 #eeeeee"></div>
<div style="left:0;top:515px;width:32px;height:33px;background:#d9d9d9;border-radius:0 3px 3px 0;box-shadow:inset -1px 0 0 #f2f2f2,inset 0 1px 0 #eeeeee"></div>
<div style="left:0;top:550px;width:32px;height:11px;background:#d9d9d9;border-radius:0 3px 3px 0;box-shadow:inset -1px 0 0 #f2f2f2,inset 0 1px 0 #eeeeee"></div>
<div class="t" style="left:12px;top:343px;font-size:16px;color:#000">C4</div>
<div class="t" style="left:15px;top:417px;font-size:10px;color:#f58a8a;font-weight:bold">A3</div>
<div style="left:0px;top:562px;width:33px;height:56px;background:#525559"></div>
<div style="left:0px;top:610px;width:21px;height:8px;background:#d8d8d8"></div>
<div style="left:390px;top:155px;width:1px;height:463px;background:#f08080"></div>
<svg style="position:absolute;left:379px;top:146px" width="23" height="11"><path d="M1.5 0.8 H21.5 L11.5 10 Z" fill="#6e5258" stroke="#f07070" stroke-width="1"/></svg>
<svg style="position:absolute;left:416px;top:316px" width="24" height="30"><rect x="1" y="1" width="1" height="1" fill="#111"/><rect x="1" y="11" width="1" height="1" fill="#111"/><rect x="1" y="1" width="1" height="1" fill="#111"/><rect x="11" y="1" width="1" height="1" fill="#111"/><rect x="4" y="1" width="1" height="1" fill="#111"/><rect x="4" y="11" width="1" height="1" fill="#111"/><rect x="1" y="4" width="1" height="1" fill="#111"/><rect x="11" y="4" width="1" height="1" fill="#111"/><rect x="7" y="1" width="1" height="1" fill="#111"/><rect x="7" y="11" width="1" height="1" fill="#111"/><rect x="1" y="7" width="1" height="1" fill="#111"/><rect x="11" y="7" width="1" height="1" fill="#111"/><rect x="10" y="1" width="1" height="1" fill="#111"/><rect x="10" y="11" width="1" height="1" fill="#111"/><rect x="1" y="10" width="1" height="1" fill="#111"/><rect x="11" y="10" width="1" height="1" fill="#111"/><path d="M6.5 6.5 V23 L10.5 19 L14 26 L16 25 L12.8 18.3 H17.5 Z" fill="#fff" stroke="#000" stroke-width="1" stroke-linejoin="miter"/></svg>
<div style="left:524px;top:136px;width:529px;height:435px;background:#ebebeb"></div>
<div style="left:531px;top:166px;width:522px;height:397px;background:#cacaca"></div>
<div class="t" style="left:785px;top:144px;font-size:15px;color:#222">Actions</div>
<svg style="position:absolute;left:1044px;top:146px" width="9" height="14"><path d="M10 2.5 H5 L3.5 3.5 L5.8 5 V8.5 L2.5 11 L3.5 11.8 H10 Z" fill="#fff" stroke="#4a4a4a" stroke-width="1"/></svg>
<div class="t dt" style="left:543px;top:183px;">Filter:</div>
<div style="left:572px;top:178px;width:181px;height:21px;border:1px solid #fff;outline:1px solid #a4a4a4;background:#a9a9ad"></div>
<div class="t dt" style="left:574px;top:182px;">zoom hor</div>
<div class="btn" style="left:758px;top:178px;width:46px;height:21px;line-height:21px"><span>Clear</span></div>
<div class="btn" style="left:809px;top:178px;width:81px;height:21px;line-height:21px"><span>Find shortcut...</span></div>
<div class="t dt" style="left:898px;top:183px;">Section:</div>
<div style="left:940px;top:177px;width:120px;height:21px;border:1px solid #acacac;background:#e8e8e8"></div>
<div class="t dt" style="left:944px;top:182px;">Main</div>
<div style="left:543px;top:204px;width:520px;height:244px;border:1px solid #828790;background:#fbfcfc"></div>
<div style="left:544px;top:229px;width:509px;height:1px;background:#e3ebf5"></div>
<div style="left:623px;top:205px;width:1px;height:23px;background:#e5ecf5"></div>
<div style="left:1014px;top:205px;width:1px;height:23px;background:#e5ecf5"></div>
<div class="t dt" style="left:551px;top:212px;">Shortcut</div>
<div class="t dt" style="left:630px;top:212px;">Description</div>
<div class="t dt" style="left:1020px;top:212px;">State</div>
<svg style="position:absolute;left:815px;top:206px" width="9" height="6"><path d="M1.5 4.5 L4.5 1.5 L7.5 4.5" fill="none" stroke="#3f6a9a" stroke-width="1.1"/></svg>
<div class="t dt" style="left:630px;top:233px;">Set default mouse modifier action for &quot;Ruler marker/region lanes left drag&quot; to &quot;...</div>
<div class="t dt" style="left:630px;top:250px;">Set default mouse modifier action for &quot;Ruler marker/region lanes left drag&quot; to &quot;...</div>
<div class="t dt" style="left:630px;top:267px;">Set default mouse modifier action for &quot;Ruler marker/region lanes left drag&quot; to &quot;...</div>
<div class="t dt" style="left:630px;top:284px;">Set default mouse modifier action for &quot;Ruler marker/region lanes left drag&quot; to &quot;...</div>
<div class="t dt" style="left:630px;top:301px;">Set default mouse modifier action for &quot;Ruler marker/region lanes left drag&quot; to &quot;...</div>
<div class="t dt" style="left:630px;top:318px;">Set default mouse modifier action for &quot;Ruler marker/region lanes left drag&quot; to &quot;...</div>
<div class="t dt" style="left:630px;top:335px;">View: Adjust horizontal zoom (MIDI CC/OSC only)</div>
<div class="t dt" style="left:551px;top:352px;">Mousewheel</div>
<div class="t dt" style="left:630px;top:352px;">View: Zoom horizontally (MIDI CC relative/mousewheel)</div>
<div class="t dt" style="left:630px;top:369px;">View: Zoom horizontally reversed (MIDI CC relative/mousewheel)</div>
<div class="t dt" style="left:551px;top:386px;">+, H, =</div>
<div class="t dt" style="left:630px;top:386px;">View: Zoom in horizontal</div>
<div class="t dt" style="left:551px;top:403px;">-, G</div>
<div class="t dt" style="left:630px;top:403px;">View: Zoom out horizontal</div>
<div style="left:562px;top:430px;width:433px;height:15px;background:#c6c6c6"></div>
<svg style="position:absolute;left:548px;top:432px" width="10" height="11"><path d="M6.5 2 L3 5.5 L6.5 9" fill="none" stroke="#505050" stroke-width="2"/></svg>
<svg style="position:absolute;left:1045px;top:432px" width="10" height="11"><path d="M2.5 2 L6.5 5.5 L2.5 9" fill="none" stroke="#505050" stroke-width="2"/></svg>
<div style="left:543px;top:457px;width:175px;height:68px;border:1px solid;border-color:#a0a0a0 #fff #fff #a0a0a0;box-shadow:inset 1px 1px 0 #fff,inset -1px -1px 0 #a0a0a0"></div>
<div style="left:550px;top:452px;width:139px;height:12px;background:#cacaca"></div>
<div class="t dt" style="left:552px;top:453px;">Shortcuts for selected action</div>
<div style="left:549px;top:469px;width:105px;height:49px;border:1px solid #7a7a7a;background:#fff"></div>
<div class="t dt" style="left:553px;top:472px;">Mousewheel</div>
<div class="btn" style="left:659px;top:468px;width:52px;height:21px;line-height:21px"><span>Add...</span></div>
<div class="btn dis" style="left:659px;top:496px;width:52px;height:21px;line-height:21px"><span>Delete</span></div>
<div class="t dt" style="left:738px;top:473px;">Custom actions:</div>
<div class="t dt" style="left:765px;top:501px;">ReaScript:</div>
<div class="btn" style="left:821px;top:467px;width:60px;height:21px;line-height:21px"><span>New...</span></div>
<div class="btn dis" style="left:887px;top:467px;width:59px;height:21px;line-height:21px"><span>Edit...</span></div>
<div class="btn dis" style="left:950px;top:467px;width:60px;height:21px;line-height:21px"><span>Delete</span></div>
<div class="btn dis" style="left:1015px;top:467px;width:60px;height:21px;line-height:21px"><span>Copy</span></div>
<div class="btn" style="left:821px;top:496px;width:60px;height:21px;line-height:21px"><span>New...</span></div>
<div class="btn" style="left:887px;top:496px;width:59px;height:21px;line-height:21px"><span>Load...</span></div>
<div class="btn dis" style="left:950px;top:496px;width:60px;height:21px;line-height:21px"><span>Edit...</span></div>
<div class="btn dis" style="left:1015px;top:496px;width:60px;height:21px;line-height:21px"><span>Delete</span></div>
<div class="btn" style="left:544px;top:535px;width:81px;height:21px;line-height:21px"><span>Import/export...</span></div>
<div class="btn" style="left:632px;top:535px;width:81px;height:21px;line-height:21px"><span>Menu editor...</span></div>
<div class="btn" style="left:821px;top:535px;width:80px;height:21px;line-height:21px"><span>Run</span></div>
<div class="btn" style="left:909px;top:535px;width:80px;height:21px;line-height:21px"><span>Run/close</span></div>
<div class="btn" style="left:996px;top:535px;width:80px;height:21px;line-height:21px"><span>Close</span></div>
</body></html>
